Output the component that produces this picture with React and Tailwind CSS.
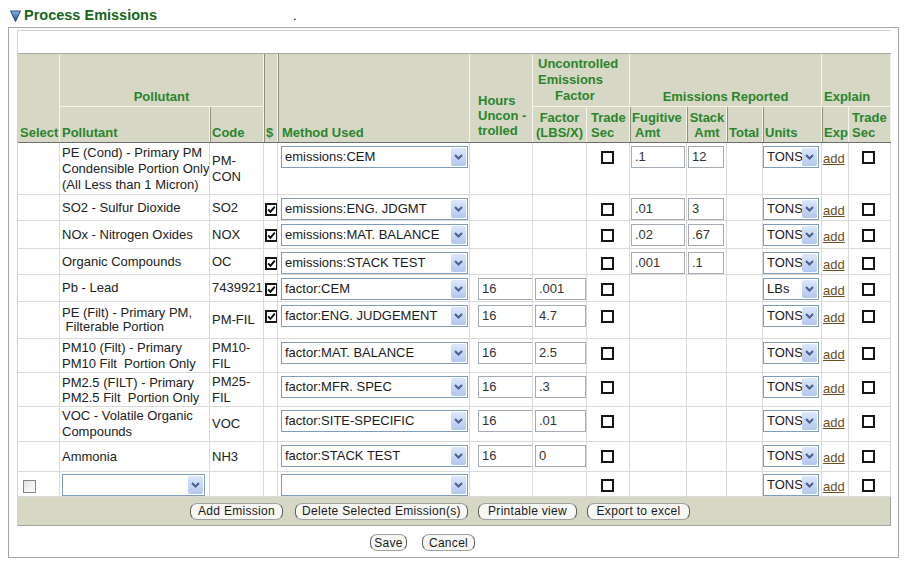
import React from "react";

const COLS =
  "grid grid-cols-[42px_150px_54px_14px_192px_63px_54px_43px_57px_40px_36px_59px_27px_42px]";

const rows = [
  { h: "h-[52px]", lead: "leading-[16px]", name: ["PE (Cond) - Primary PM", "Condensible Portion Only", "(All Less than 1 Micron)"], code: ["PM-", "CON"], d: false, method: "emissions:CEM", fug: ".1", stack: "12", units: "TONS" },
  { h: "h-[26px]", lead: "leading-[16px]", name: ["SO2 - Sulfur Dioxide"], code: ["SO2"], d: true, method: "emissions:ENG. JDGMT", fug: ".01", stack: "3", units: "TONS" },
  { h: "h-[28px]", lead: "leading-[16px]", name: ["NOx - Nitrogen Oxides"], code: ["NOX"], d: true, method: "emissions:MAT. BALANCE", fug: ".02", stack: ".67", units: "TONS" },
  { h: "h-[26px]", lead: "leading-[16px]", name: ["Organic Compounds"], code: ["OC"], d: true, method: "emissions:STACK TEST", fug: ".001", stack: ".1", units: "TONS" },
  { h: "h-[27px]", lead: "leading-[16px]", name: ["Pb - Lead"], code: ["7439921"], d: true, method: "factor:CEM", hours: "16", factor: ".001", units: "LBs" },
  { h: "h-[37px]", lead: "leading-[14px]", name: ["PE (Filt) - Primary PM,", "\u00a0Filterable Portion"], code: ["PM-FIL"], d: true, method: "factor:ENG. JUDGEMENT", hours: "16", factor: "4.7", units: "TONS" },
  { h: "h-[34px]", lead: "leading-[16px]", name: ["PM10 (Filt) - Primary", "PM10 Filt\u00a0 Portion Only"], code: ["PM10-", "FIL"], d: false, method: "factor:MAT. BALANCE", hours: "16", factor: "2.5", units: "TONS" },
  { h: "h-[34px]", lead: "leading-[15px]", name: ["PM2.5 (FILT) - Primary", "PM2.5 Filt\u00a0 Portion Only"], code: ["PM25-", "FIL"], d: false, method: "factor:MFR. SPEC", hours: "16", factor: ".3", units: "TONS" },
  { h: "h-[35px]", lead: "leading-[16px]", name: ["VOC - Volatile Organic", "Compounds"], code: ["VOC"], d: false, method: "factor:SITE-SPECIFIC", hours: "16", factor: ".01", units: "TONS" },
  { h: "h-[30px]", lead: "leading-[16px]", name: ["Ammonia"], code: ["NH3"], d: false, method: "factor:STACK TEST", hours: "16", factor: "0", units: "TONS" },
];

function Chevron() {
  return (
    <svg width="9" height="6" viewBox="0 0 9 6">
      <path d="M1 1 L4.5 4.5 L8 1" fill="none" stroke="#4b5f8c" strokeWidth="2" />
    </svg>
  );
}

function Sel({ className, children }) {
  return (
    <div className={`h-[22px] border border-[#7f9db9] bg-white flex items-center text-[13px] text-[#1a1a1a] ${className}`}>
      <span className="flex-1 pl-[3px] whitespace-nowrap overflow-hidden">{children}</span>
      <span className="w-[15px] h-[18px] mr-px rounded-[2px] bg-linear-to-b from-[#dde7fb] to-[#b3c7ee] flex items-center justify-center">
        <Chevron />
      </span>
    </div>
  );
}

function Inp({ className, children }) {
  return (
    <div className={`h-[22px] border-[#a3aab3] bg-white flex items-center pl-[3px] text-[13px] text-[#333] ${className}`}>
      {children}
    </div>
  );
}

function Chk({ checked, className }) {
  return (
    <div className={`w-[13px] h-[13px] border-2 border-[#161616] bg-white flex items-center justify-center ${className}`}>
      {checked && (
        <svg width="9" height="9" viewBox="0 0 9 9">
          <path d="M1.2 4.4 L3.4 6.8 L7.8 1.6" fill="none" stroke="#000" strokeWidth="1.8" />
        </svg>
      )}
    </div>
  );
}

function Btn({ className, children }) {
  return (
    <div className={`h-[17px] rounded-[7px] border border-[#a0a0a0] border-x-[#5c5c5c] bg-[#f7f7f3] text-[12px] tracking-[0.3px] text-[#1a1a1a] flex items-center justify-center leading-none ${className}`}>
      {children}
    </div>
  );
}

const cell = "border-r border-b border-[#dadada] overflow-hidden";
const hd = "flex flex-col justify-end pb-[2px] leading-[15px] border-r border-[#f5f5ee]";

function Row({ r }) {
  return (
    <div className={`${COLS} ${r.h}`}>
      <div className={cell} />
      <div className={`${cell} flex flex-col justify-center pl-[2px] whitespace-nowrap ${r.lead}`}>
        {r.name.map((n) => (
          <span key={n}>{n}</span>
        ))}
      </div>
      <div className={`${cell} flex flex-col justify-center pl-[2px] leading-[16px]`}>
        {r.code.map((c) => (
          <span key={c}>{c}</span>
        ))}
      </div>
      <div className={`${cell} pt-[8px]`}>
        {r.d && <Chk checked className="ml-px" />}
      </div>
      <div className={`${cell} pt-[3px]`}>
        <Sel className="ml-[3px] w-[187px]">{r.method}</Sel>
      </div>
      <div className={`${cell} pt-[3px]`}>
        {r.hours && <Inp className="ml-[8px] w-[54px] border-y border-l">{r.hours}</Inp>}
      </div>
      <div className={`${cell} pt-[3px]`}>
        {r.factor && <Inp className="ml-[2px] w-[51px] border">{r.factor}</Inp>}
      </div>
      <div className={`${cell} pt-[8px]`}>
        <Chk className="ml-[14px]" />
      </div>
      <div className={`${cell} pt-[3px]`}>
        {r.fug && <Inp className="ml-px w-[54px] border">{r.fug}</Inp>}
      </div>
      <div className={`${cell} pt-[3px]`}>
        {r.stack && <Inp className="ml-px w-[36px] border">{r.stack}</Inp>}
      </div>
      <div className={cell} />
      <div className={`${cell} pt-[3px]`}>
        <Sel className="w-[56px]">{r.units}</Sel>
      </div>
      <div className={`${cell} pt-[8px] pl-px leading-[15px]`}>
        <span className="text-[#6b4f1d] underline">add</span>
      </div>
      <div className={`${cell} pt-[8px]`}>
        <Chk className="ml-[13px]" />
      </div>
    </div>
  );
}

export default function App() {
  return (
    <div className="w-[906px] h-[562px] bg-white overflow-hidden font-['Liberation_Sans',Arial,sans-serif] text-[13px] text-[#222]">
      {/* title */}
      <div className="h-[20px] mt-[6px] pl-[10px] flex items-center">
        <svg width="11" height="12" viewBox="0 0 11 12">
          <defs>
            <linearGradient id="tri" x1="0" y1="0" x2="0" y2="1">
              <stop offset="0" stopColor="#8fb4de" />
              <stop offset="1" stopColor="#1f4f8c" />
            </linearGradient>
          </defs>
          <polygon points="0.5,1 10.5,1 5.5,11.5" fill="url(#tri)" stroke="#24497a" strokeWidth="1" />
        </svg>
        <span className="ml-[3px] text-[14.5px] font-bold text-[#17661a]">Process Emissions</span>
        <span className="ml-[136px] text-[13px] text-black">.</span>
      </div>

      {/* frame */}
      <div className="ml-[8px] mt-[1px] w-[891px] h-[531px] border border-[#a6a6a6]">
        <div className="ml-[8px] mt-[2px] w-[874px] border-l border-t border-[#d2d2d2]">
          <div className="h-[22px]" />

          {/* header */}
          <div className={`${COLS} grid-rows-[53px_35px] bg-[#d7d7c6] font-bold text-[13px] text-[#2b852b] border-t border-[#a8a8a0] border-b border-b-[#6e6e6e]`}>
            <div className={`${hd} col-start-1 row-start-1 row-span-2 pl-[2px]`}>Select</div>
            <div className={`${hd} col-start-2 col-span-2 row-start-1 border-b items-center`}>Pollutant</div>
            <div className={`${hd} col-start-4 row-start-1 row-span-2 pl-[1px] border-l border-l-[#8d8d82]`}>$</div>
            <div className={`${hd} col-start-5 row-start-1 row-span-2 pl-[3px] border-l border-l-[#8d8d82]`}>Method Used</div>
            <div className={`${hd} col-start-6 row-start-1 row-span-2 pl-[8px] pb-[4px]`}>
              <span>Hours</span>
              <span>Uncon -</span>
              <span>trolled</span>
            </div>
            <div className={`${hd} col-start-7 col-span-2 row-start-1 border-b leading-[16px] pl-[5px]`}>
              <span>Uncontrolled</span>
              <span>Emissions</span>
              <span className="pl-[17px]">Factor</span>
            </div>
            <div className={`${hd} col-start-9 col-span-4 row-start-1 border-b items-center`}>Emissions Reported</div>
            <div className={`${hd} col-start-13 col-span-2 row-start-1 border-b pl-[2px]`}>Explain</div>

            <div className={`${hd} col-start-2 row-start-2 pl-[2px]`}>Pollutant</div>
            <div className={`${hd} col-start-3 row-start-2 pl-[1px] border-l border-l-[#8d8d82]`}>Code</div>
            <div className={`${hd} col-start-7 row-start-2 items-center`}>
              <span>Factor</span>
              <span>(LBS/X)</span>
            </div>
            <div className={`${hd} col-start-8 row-start-2 pl-[4px]`}>
              <span>Trade</span>
              <span>Sec</span>
            </div>
            <div className={`${hd} col-start-9 row-start-2 pl-[1px] border-l border-l-[#8d8d82]`}>
              <span>Fugitive</span>
              <span className="pl-[3px]">Amt</span>
            </div>
            <div className={`${hd} col-start-10 row-start-2 items-center border-l border-l-[#8d8d82]`}>
              <span>Stack</span>
              <span>Amt</span>
            </div>
            <div className={`${hd} col-start-11 row-start-2 pl-[1px] border-l border-l-[#8d8d82]`}>Total</div>
            <div className={`${hd} col-start-12 row-start-2 pl-[1px] border-l border-l-[#8d8d82]`}>Units</div>
            <div className={`${hd} col-start-13 row-start-2 pl-[1px] pb-0 border-l border-l-[#8d8d82]`}>Exp</div>
            <div className={`${hd} col-start-14 row-start-2 pl-[3px]`}>
              <span>Trade</span>
              <span>Sec</span>
            </div>
          </div>

          {/* body */}
          {rows.map((r) => (
            <Row key={r.method} r={r} />
          ))}

          {/* new row */}
          <div className={`${COLS} h-[25px]`}>
            <div className={`${cell} pt-[8px]`}>
              <div className="ml-[5px] w-[13px] h-[13px] border border-[#7a8797] bg-linear-to-br from-[#e2e2dc] to-white" />
            </div>
            <div className={`${cell} pt-[2px]`}>
              <Sel className="ml-[2px] w-[143px]"></Sel>
            </div>
            <div className={cell} />
            <div className={cell} />
            <div className={`${cell} pt-[2px]`}>
              <Sel className="ml-[3px] w-[187px]"></Sel>
            </div>
            <div className={cell} />
            <div className={cell} />
            <div className={`${cell} pt-[7px]`}>
              <Chk className="ml-[14px]" />
            </div>
            <div className={cell} />
            <div className={cell} />
            <div className={cell} />
            <div className={`${cell} pt-[2px]`}>
              <Sel className="w-[56px]">TONS</Sel>
            </div>
            <div className={`${cell} pt-[7px] pl-px leading-[15px]`}>
              <span className="text-[#6b4f1d] underline">add</span>
            </div>
            <div className={`${cell} pt-[7px]`}>
              <Chk className="ml-[13px]" />
            </div>
          </div>

          {/* action buttons */}
          <div className="h-[29px] bg-[#d7d7c6] border-r border-b border-[#a2a29a] flex items-center pl-[172px]">
            <Btn className="w-[93px]">Add Emission</Btn>
            <Btn className="ml-[12px] w-[173px]">Delete Selected Emission(s)</Btn>
            <Btn className="ml-[10px] w-[99px]">Printable view</Btn>
            <Btn className="ml-[10px] w-[103px]">Export to excel</Btn>
          </div>
        </div>

        <div className="mt-[8px] flex pl-[361px]">
          <Btn className="w-[37px]">Save</Btn>
          <Btn className="ml-[15px] w-[53px]">Cancel</Btn>
        </div>
      </div>
    </div>
  );
}
